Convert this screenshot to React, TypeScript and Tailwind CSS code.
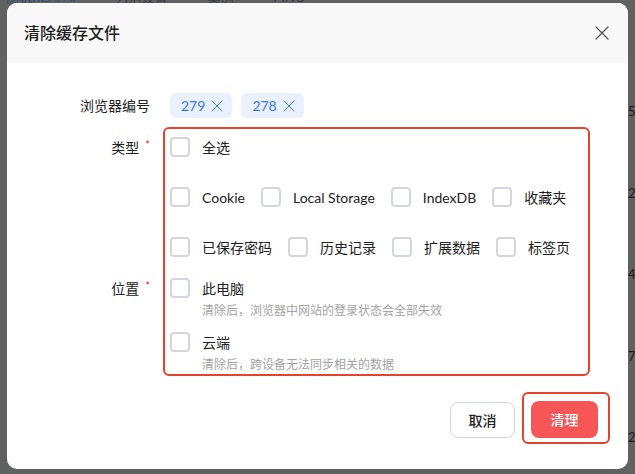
import React from 'react';
import { X } from 'lucide-react';

const FONT = 'Lato, "Noto Sans CJK SC", sans-serif';

const TYPE_ROWS = [
  ['全选'],
  ['Cookie', 'Local Storage', 'IndexDB', '收藏夹'],
  ['已保存密码', '历史记录', '扩展数据', '标签页'],
];

const LOCATIONS = [
  { name: '此电脑', hint: '清除后，浏览器中网站的登录状态会全部失效' },
  { name: '云端', hint: '清除后，跨设备无法同步相关的数据' },
];

const Box = () => (
  <span className="w-5 h-5 shrink-0 rounded-[4px] border-2 border-[#d3d7dd] bg-white" />
);

const Tag = ({ value }: { value: string }) => (
  <span className="h-[25px] pl-[11px] pr-[5px] flex items-center gap-[2px] rounded-[6px] bg-[#e9f1fe] text-[14px] text-[#3a78ef]">
    {value}
    <X size={20} strokeWidth={1.2} />
  </span>
);

// one line of the form: a 143px label slot, then the content
const Line = ({ label, required, children }: { label?: string; required?: boolean; children: React.ReactNode }) => (
  <div className="flex items-center gap-[20px] h-5">
    <div className="w-[143px] shrink-0 flex items-center justify-end text-[14px] text-[#222]">
      {label}
      {required && <span className="ml-[6px] -mt-[3px] text-[11px] text-[#f5222d]">*</span>}
    </div>
    {children}
  </div>
);

export default function App() {
  return (
    <div className="relative w-[635px] h-[474px] overflow-hidden bg-[#606161]" style={{ fontFamily: FONT }}>
      {/* page behind the overlay */}
      <div className="flex items-end gap-10 h-[8px] px-[6px] text-[13px] leading-none text-[#3c3f44] -translate-y-[4px]">
        <span className="text-[#34507c]">随机REAI AI</span>
        <span>刀别设置</span>
        <span>案例</span>
        <span>PING</span>
        <span>•••</span>
      </div>
      <div className="absolute left-[628px] top-[102px] flex flex-col gap-[62px] text-[13px] text-[#1b1b1b]">
        <span>50</span>
        <span>20</span>
        <span>45</span>
        <span>74</span>
        <span>27</span>
      </div>

      {/* modal */}
      <div className="absolute left-[7px] top-[3px] w-[621px] h-[466px] rounded-[10px] bg-white overflow-hidden flex flex-col">
        <div className="h-[60px] shrink-0 bg-[#f8f8f8] flex items-center justify-between pl-[17px] pr-[14px]">
          <span className="text-[16px] font-medium text-[#1c1c1c]">清除缓存文件</span>
          <X size={24} strokeWidth={1.3} className="text-[#555]" />
        </div>

        <div className="relative flex-1 flex flex-col">
          <div className="flex gap-[20px] items-center pt-[30px]">
            <div className="w-[143px] shrink-0 h-[25px] flex items-center justify-end text-[14px] text-[#222]">浏览器编号</div>
            <div className="flex gap-[9px]">
              <Tag value="279" />
              <Tag value="278" />
            </div>
          </div>

          <div className="flex flex-col gap-[30px] mt-[19px]">
            {TYPE_ROWS.map((row, i) => (
              <Line key={i} label={i === 0 ? '类型' : undefined} required={i === 0}>
                <div className="flex items-center gap-[16px]">
                  {row.map((item) => (
                    <div key={item} className="flex items-center gap-[12px] text-[14px] text-[#222]">
                      <Box />
                      <span>{item}</span>
                    </div>
                  ))}
                </div>
              </Line>
            ))}
          </div>

          <div className="flex flex-col gap-[12px] mt-[21px]">
            {LOCATIONS.map((loc, i) => (
              <div key={loc.name} className="flex flex-col">
                <Line label={i === 0 ? '位置' : undefined} required={i === 0}>
                  <div className="flex items-center gap-[12px] text-[14px] text-[#222]">
                    <Box />
                    <span>{loc.name}</span>
                  </div>
                </Line>
                <div className="pl-[195px] mt-[4px] h-[18px] flex items-center text-[12px] text-[#a3a3a3]">{loc.hint}</div>
              </div>
            ))}
          </div>

          <div className="flex justify-end gap-[16px] pr-[30px] mt-[28px]">
            <button className="w-[65px] h-[36px] rounded-[8px] border border-[#d2d6dc] bg-white text-[14px] font-medium text-[#222]">
              取消
            </button>
            <button className="w-[67px] h-[37px] -mt-px rounded-[8px] bg-[#f75656] text-[14px] font-medium text-white">
              清理
            </button>
          </div>

          {/* highlight annotations */}
          <div className="absolute left-[156px] top-[64px] w-[427px] h-[249px] rounded-[6px] border-2 border-[#e5432d] pointer-events-none" />
          <div className="absolute left-[515px] top-[329px] w-[88px] h-[52px] rounded-[6px] border-2 border-[#e5432d] pointer-events-none" />
        </div>
      </div>
    </div>
  );
}
